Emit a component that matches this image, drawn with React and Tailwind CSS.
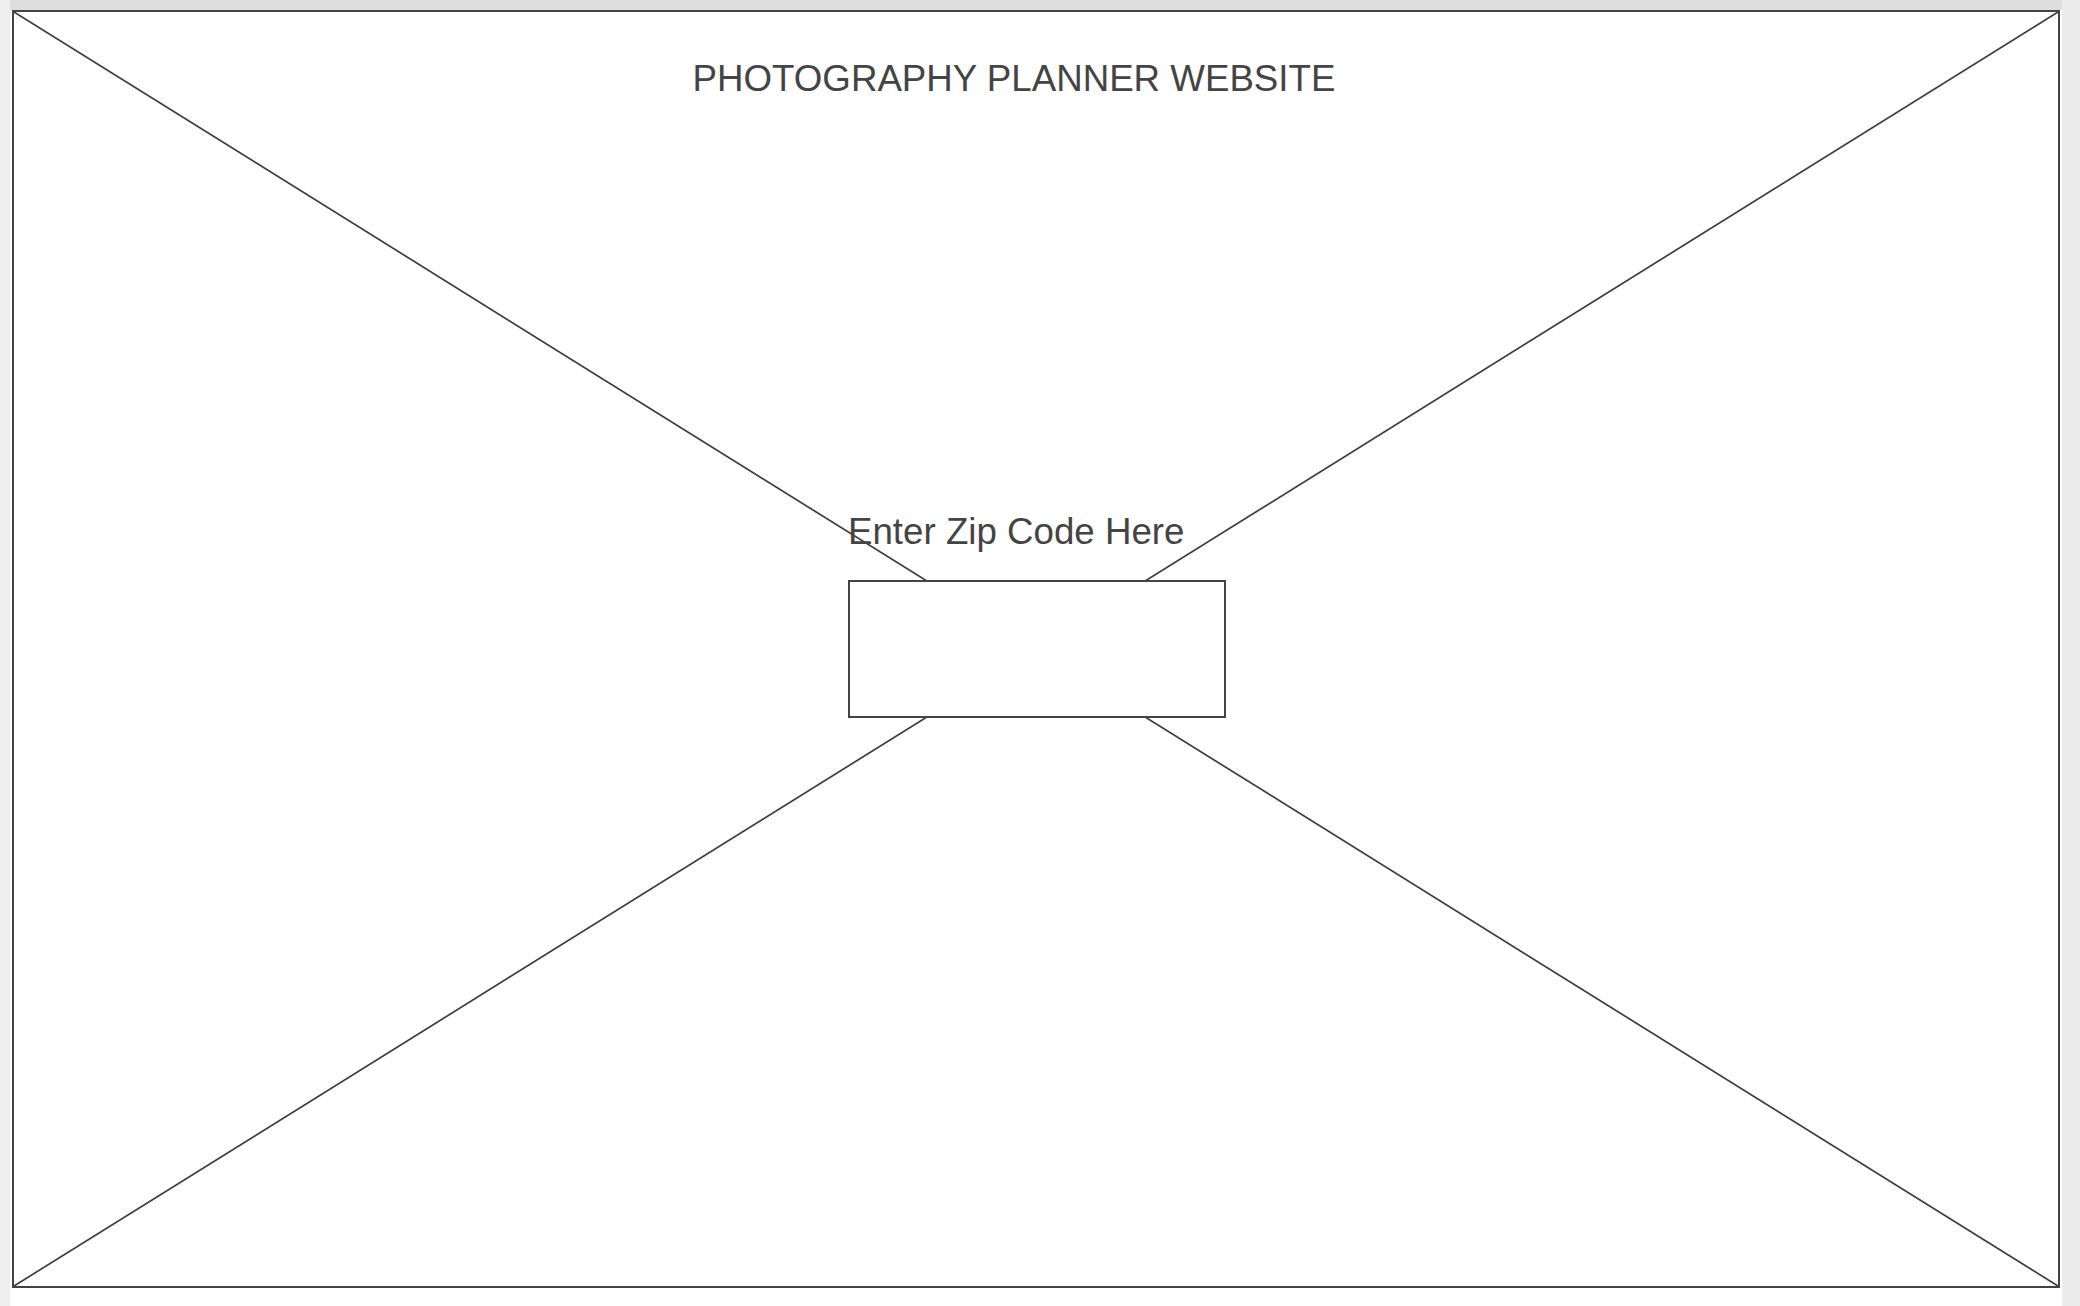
export default function App() {
  return (
    <div className="flex w-[2080px] h-[1306px] bg-white overflow-hidden" style={{ fontFamily: '"Liberation Sans", Arial, sans-serif' }}>
      <div className="w-[10px] h-full bg-[#eeeeee]" />
      <div className="w-[2052px] h-full flex flex-col bg-white">
        <div className="h-[10px] w-full bg-[#dedede]" />
        <div className="ml-[2px] w-[2048px] h-[1278px] border-2 border-[#444444] relative bg-white">
          <svg className="absolute inset-0 w-full h-full" viewBox="0 0 2044 1274" preserveAspectRatio="none">
            <line x1="0" y1="0" x2="2044" y2="1274" stroke="#3d3d3d" strokeWidth="1.7" />
            <line x1="2044" y1="0" x2="0" y2="1274" stroke="#3d3d3d" strokeWidth="1.7" />
          </svg>
          <div className="relative flex flex-col items-center">
            <div className="pt-[48px] pr-[44px] text-[36.7px] leading-[37px] text-[#444444] whitespace-nowrap">
              PHOTOGRAPHY PLANNER WEBSITE
            </div>
            <div className="mt-[416px] ml-[2px] w-[378px]">
              <div className="text-[36.7px] leading-[37px] text-[#444444] whitespace-nowrap">Enter Zip Code Here</div>
              <div className="mt-[30px] w-[378px] h-[138px] border-2 border-[#444444] bg-white" />
            </div>
          </div>
        </div>
      </div>
      <div className="flex-1 h-full bg-[#ececec]" />
    </div>
  );
}
